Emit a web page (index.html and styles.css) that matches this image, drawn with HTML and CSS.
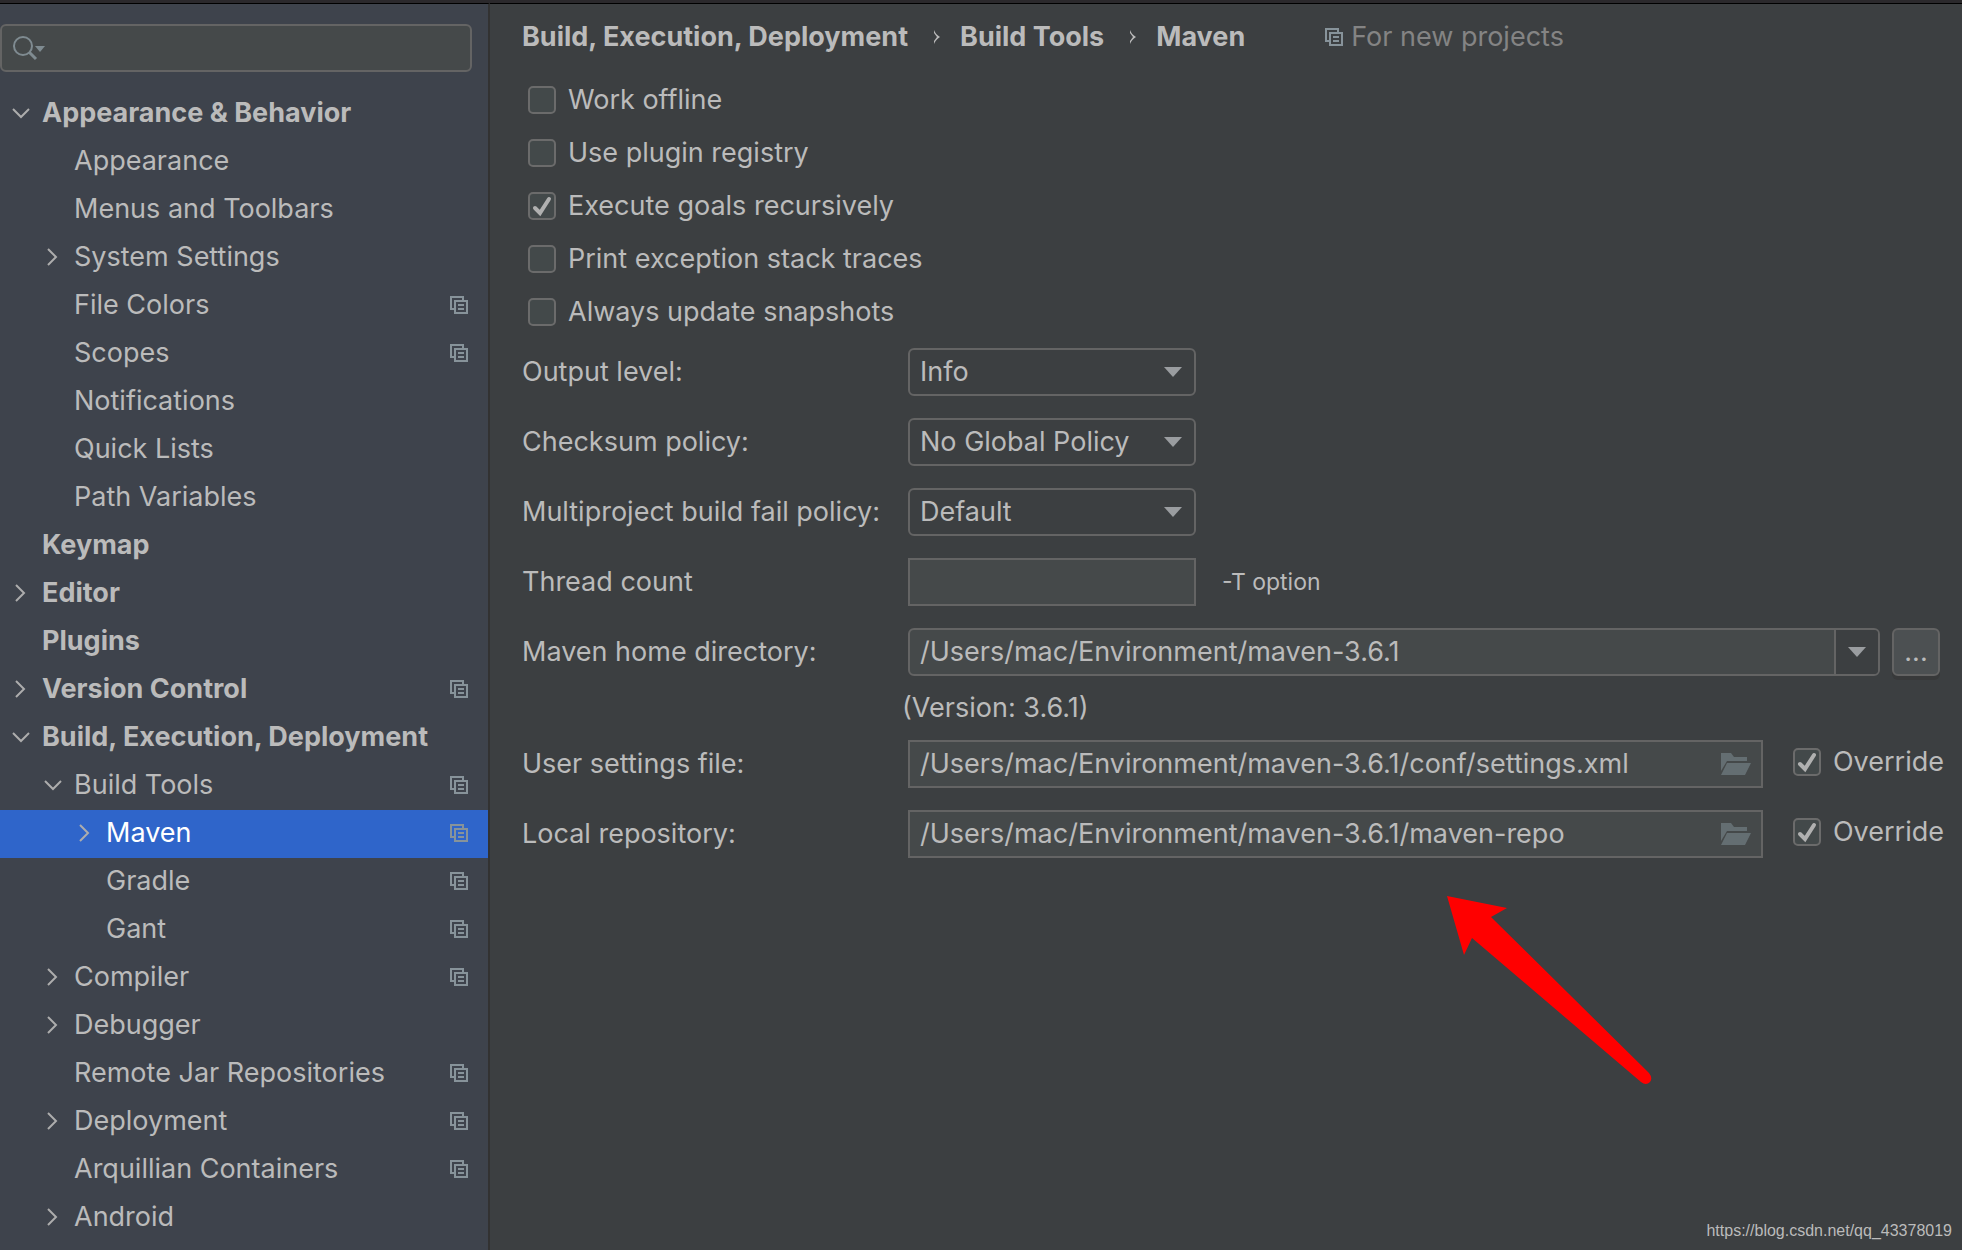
FILE: index.html
```html
<!DOCTYPE html>
<html lang="en">
<head>
<meta charset="utf-8">
<title>Preferences</title>
<meta name="viewport" content="width=device-width, initial-scale=1">
<link rel="stylesheet" href="styles.css">
</head>
<body>
<svg class="sprite" aria-hidden="true">
  <symbol id="open" viewBox="0 0 20 20"><path d="M3 6l8 8 8-8" fill="none" stroke="currentColor" stroke-width="2"/></symbol>
  <symbol id="closed" viewBox="0 0 20 20"><path d="M6 2l8 8-8 8" fill="none" stroke="currentColor" stroke-width="2"/></symbol>
  <symbol id="copy" viewBox="0 0 18 18"><path d="M4 13H1V1h12v3M5 5h12v12H5zM8 9h6M8 13h6" fill="none" stroke="currentColor" stroke-width="2"/></symbol>
  <symbol id="folder" viewBox="0 0 30 22"><path d="M0 0h10l3 4h13v4H6L0 18zM6 10h24l-6 12H0z" fill="currentColor"/></symbol>
  <symbol id="down" viewBox="0 0 18 10"><path d="M0 0h18l-9 10z" fill="currentColor"/></symbol>
  <symbol id="crumb" viewBox="0 0 6 14"><path d="M0 0c1 3 3 5 6 7-3 2-5 4-6 7v-3l3-4-3-4z" fill="currentColor"/></symbol>
</svg>
<div class="window">
  <aside class="sidebar">
    <div class="search">
      <svg class="search-icon" viewBox="0 0 34 26" aria-hidden="true"><circle cx="11" cy="11" r="9" fill="none" stroke="currentColor" stroke-width="2"/><path d="M17 17l7 7" stroke="currentColor" stroke-width="3"/><path d="M23 11h10l-5 6z" fill="currentColor"/></svg>
      <input class="search-input" type="text" aria-label="Search settings">
    </div>
    <nav aria-label="Settings">
      <ul class="tree">
        <li><a class="row top" href="#"><svg class="chevron"><use href="#open"/></svg><span class="name">Appearance &amp; Behavior</span></a></li>
        <li><a class="row child" href="#"><span class="chevron"></span><span class="name">Appearance</span></a></li>
        <li><a class="row child" href="#"><span class="chevron"></span><span class="name">Menus and Toolbars</span></a></li>
        <li><a class="row child" href="#"><svg class="chevron"><use href="#closed"/></svg><span class="name">System Settings</span></a></li>
        <li><a class="row child" href="#"><span class="chevron"></span><span class="name">File Colors</span><svg class="copy"><use href="#copy"/></svg></a></li>
        <li><a class="row child" href="#"><span class="chevron"></span><span class="name">Scopes</span><svg class="copy"><use href="#copy"/></svg></a></li>
        <li><a class="row child" href="#"><span class="chevron"></span><span class="name">Notifications</span></a></li>
        <li><a class="row child" href="#"><span class="chevron"></span><span class="name">Quick Lists</span></a></li>
        <li><a class="row child" href="#"><span class="chevron"></span><span class="name">Path Variables</span></a></li>
        <li><a class="row top" href="#"><span class="chevron"></span><span class="name">Keymap</span></a></li>
        <li><a class="row top" href="#"><svg class="chevron"><use href="#closed"/></svg><span class="name">Editor</span></a></li>
        <li><a class="row top" href="#"><span class="chevron"></span><span class="name">Plugins</span></a></li>
        <li><a class="row top" href="#"><svg class="chevron"><use href="#closed"/></svg><span class="name">Version Control</span><svg class="copy"><use href="#copy"/></svg></a></li>
        <li><a class="row top" href="#"><svg class="chevron"><use href="#open"/></svg><span class="name">Build, Execution, Deployment</span></a></li>
        <li><a class="row child" href="#"><svg class="chevron"><use href="#open"/></svg><span class="name">Build Tools</span><svg class="copy"><use href="#copy"/></svg></a></li>
        <li><a class="row grandchild selected" href="#" aria-current="page"><svg class="chevron"><use href="#closed"/></svg><span class="name">Maven</span><svg class="copy"><use href="#copy"/></svg></a></li>
        <li><a class="row grandchild" href="#"><span class="chevron"></span><span class="name">Gradle</span><svg class="copy"><use href="#copy"/></svg></a></li>
        <li><a class="row grandchild" href="#"><span class="chevron"></span><span class="name">Gant</span><svg class="copy"><use href="#copy"/></svg></a></li>
        <li><a class="row child" href="#"><svg class="chevron"><use href="#closed"/></svg><span class="name">Compiler</span><svg class="copy"><use href="#copy"/></svg></a></li>
        <li><a class="row child" href="#"><svg class="chevron"><use href="#closed"/></svg><span class="name">Debugger</span></a></li>
        <li><a class="row child" href="#"><span class="chevron"></span><span class="name">Remote Jar Repositories</span><svg class="copy"><use href="#copy"/></svg></a></li>
        <li><a class="row child" href="#"><svg class="chevron"><use href="#closed"/></svg><span class="name">Deployment</span><svg class="copy"><use href="#copy"/></svg></a></li>
        <li><a class="row child" href="#"><span class="chevron"></span><span class="name">Arquillian Containers</span><svg class="copy"><use href="#copy"/></svg></a></li>
        <li><a class="row child" href="#"><svg class="chevron"><use href="#closed"/></svg><span class="name">Android</span></a></li>
      </ul>
    </nav>
  </aside>

  <main class="main">
    <header class="header">
      <h1 class="crumbs"><span>Build, Execution, Deployment</span><svg class="crumb"><use href="#crumb"/></svg><span>Build Tools</span><svg class="crumb"><use href="#crumb"/></svg><span>Maven</span></h1>
      <p class="scope"><svg class="copy"><use href="#copy"/></svg>For new projects</p>
    </header>

    <form class="form">
      <div class="checks">
        <label class="check"><input type="checkbox">Work offline</label>
        <label class="check"><input type="checkbox">Use plugin registry</label>
        <label class="check"><input type="checkbox" checked>Execute goals recursively</label>
        <label class="check"><input type="checkbox">Print exception stack traces</label>
        <label class="check"><input type="checkbox">Always update snapshots</label>
      </div>

      <div class="fields">
        <label for="output">Output level:</label>
        <div class="line"><select id="output" class="box select"><option>Info</option></select></div>

        <label for="checksum">Checksum policy:</label>
        <div class="line"><select id="checksum" class="box select"><option>No Global Policy</option></select></div>

        <label for="fail">Multiproject build fail policy:</label>
        <div class="line"><select id="fail" class="box select"><option>Default</option></select></div>

        <label for="threads">Thread count</label>
        <div class="line"><input id="threads" class="box text short" type="text"><span class="hint">-T option</span></div>

        <label for="home">Maven home directory:</label>
        <div class="line">
          <div class="box combo"><input id="home" class="bare" type="text" value="/Users/mac/Environment/maven-3.6.1"><button class="drop" type="button" aria-label="Show directories"><svg class="down"><use href="#down"/></svg></button></div>
          <button class="box more" type="button" aria-label="Browse">...</button>
        </div>

        <p class="version">(Version: 3.6.1)</p>

        <label for="settings">User settings file:</label>
        <div class="line">
          <div class="box path"><input id="settings" class="bare" type="text" value="/Users/mac/Environment/maven-3.6.1/conf/settings.xml"><button class="browse" type="button" aria-label="Choose file"><svg class="folder"><use href="#folder"/></svg></button></div>
          <label class="check override"><input type="checkbox" checked>Override</label>
        </div>

        <label for="repo">Local repository:</label>
        <div class="line">
          <div class="box path"><input id="repo" class="bare" type="text" value="/Users/mac/Environment/maven-3.6.1/maven-repo"><button class="browse" type="button" aria-label="Choose folder"><svg class="folder"><use href="#folder"/></svg></button></div>
          <label class="check override"><input type="checkbox" checked>Override</label>
        </div>
      </div>
    </form>

    <svg class="arrow" viewBox="0 0 206 190" aria-hidden="true"><path d="M0 0l60 12-16 9 158 156q4 5 1 9-4 4-9 0L25 42l-8 17z" fill="#f00"/></svg>
    <p class="watermark">https://blog.csdn.net/qq_43378019</p>
  </main>
</div>
</body>
</html>
```

FILE: styles.css
```css
* {
  box-sizing: border-box;
}

body {
  margin: 0;
  background: #3c3f41;
  color: #bbbbbb;
  font: 27px/32px Inter, "Liberation Sans", sans-serif;
  font-optical-sizing: none;
}

h1, p, ul {
  margin: 0;
  padding: 0;
}

input, select, button {
  font: inherit;
  font-optical-sizing: none;
  color: inherit;
}

.sprite {
  display: none;
}

.window {
  display: grid;
  grid-template-columns: 490px minmax(0, 1fr);
  min-height: 100vh;
  border-top: 3px solid #2b292c;
}

/* Sidebar */

.sidebar {
  padding: 20px 0 8px;
  border-top: 1px solid #000;
  border-right: 2px solid #323232;
  background: #3e434c;
}

.search {
  display: flex;
  align-items: center;
  height: 48px;
  margin: 0 16px 18px 0;
  padding-left: 10px;
  border: 2px solid #646464;
  border-radius: 6px;
  background: #45494a;
}

.search-icon {
  flex: none;
  width: 34px;
  height: 26px;
  color: #7f8b91;
}

.search-input {
  flex: 1;
  min-width: 0;
  padding: 0 8px;
  border: 0;
  outline: 0;
  background: none;
}

.tree {
  list-style: none;
}

.row {
  display: flex;
  align-items: center;
  height: 48px;
  padding: 0 20px 2px 10px;
  color: inherit;
  text-decoration: none;
  white-space: nowrap;
}

.top {
  font-weight: 700;
}

.child {
  padding-left: 42px;
}

.grandchild {
  padding-left: 74px;
}

.selected {
  background: #2f65ca;
}

.selected .name {
  color: #fff;
}

.chevron {
  flex: none;
  width: 20px;
  height: 20px;
  margin-right: 12px;
  color: #adadad;
}

.name {
  flex: 1;
}

.copy {
  flex: none;
  width: 18px;
  height: 18px;
  color: #87939a;
}

/* Settings page */

.main {
  position: relative;
  padding: 17px 18px 40px 32px;
  border-top: 1px solid #000;
}

.header {
  display: flex;
  align-items: center;
  gap: 80px;
  white-space: nowrap;
}

.crumbs {
  display: flex;
  align-items: center;
  gap: 20px;
  font-size: 27px;
  font-weight: 700;
}

.crumb {
  width: 6px;
  height: 14px;
  margin-left: 6px;
}

.scope {
  display: flex;
  align-items: center;
  gap: 8px;
  color: #848484;
}

.checks {
  display: grid;
  justify-items: start;
  gap: 21px;
  padding: 31px 0 20px 6px;
}

.check {
  display: flex;
  align-items: center;
  gap: 12px;
  white-space: nowrap;
}

.check input {
  appearance: none;
  flex: none;
  width: 28px;
  height: 28px;
  margin: 0;
  border: 2px solid #6b6b6b;
  border-radius: 5px;
  background: #43494a;
}

.check input:checked {
  background: #43494a url("data:image/svg+xml,%3Csvg xmlns='http://www.w3.org/2000/svg' viewBox='0 0 24 24'%3E%3Cpath d='M5 14l5 5 9-14' fill='none' stroke='%23b0b0b0' stroke-width='4' stroke-linecap='round'/%3E%3C/svg%3E") center / 24px 24px no-repeat;
}

.fields {
  display: grid;
  grid-template-columns: 386px minmax(0, 1fr);
  row-gap: 22px;
  align-items: center;
}

.line {
  display: flex;
  align-items: center;
}

.box {
  height: 48px;
  border: 2px solid #646464;
  border-radius: 6px;
  outline: 0;
  background: #45494a;
}

.select {
  appearance: none;
  width: 288px;
  padding: 0 40px 0 10px;
  background: url("data:image/svg+xml,%3Csvg xmlns='http://www.w3.org/2000/svg' viewBox='0 0 18 10'%3E%3Cpath d='M0 0h18l-9 10z' fill='%239a9da0'/%3E%3C/svg%3E") right 12px center / 18px 10px no-repeat;
}

.text,
.path {
  border-radius: 0;
}

.short {
  width: 288px;
  padding: 0 10px;
}

.hint {
  margin-left: 26px;
  font-size: 23px;
}

.combo,
.path {
  display: flex;
  flex: 1;
  min-width: 0;
}

.bare {
  flex: 1;
  min-width: 0;
  padding: 0 10px;
  border: 0;
  outline: 0;
  background: none;
}

.drop {
  display: grid;
  place-items: center;
  width: 44px;
  padding: 0;
  border: 0;
  border-left: 2px solid #646464;
  border-radius: 0 4px 4px 0;
  background: #3c3f41;
}

.down {
  width: 18px;
  height: 10px;
  color: #9a9da0;
}

.more {
  width: 48px;
  margin: 0 4px 0 12px;
  padding: 0;
  background: #4c5052;
  box-shadow: 0 4px 0 #38393a;
}

.version {
  grid-column: 2;
  margin: -6px 0 -6px -6px;
}

.browse {
  display: grid;
  place-items: center;
  padding: 0 10px;
  border: 0;
  background: none;
}

.folder {
  width: 30px;
  height: 22px;
  color: #646e72;
}

.override {
  margin-left: 30px;
  padding-bottom: 4px;
}

/* Annotations over the page */

.arrow {
  position: absolute;
  top: 892px;
  left: 957px;
  width: 206px;
  height: 190px;
}

.watermark {
  position: absolute;
  right: 10px;
  bottom: 9px;
  font: 16px/20px "Liberation Sans", Arial, sans-serif;
}
```
